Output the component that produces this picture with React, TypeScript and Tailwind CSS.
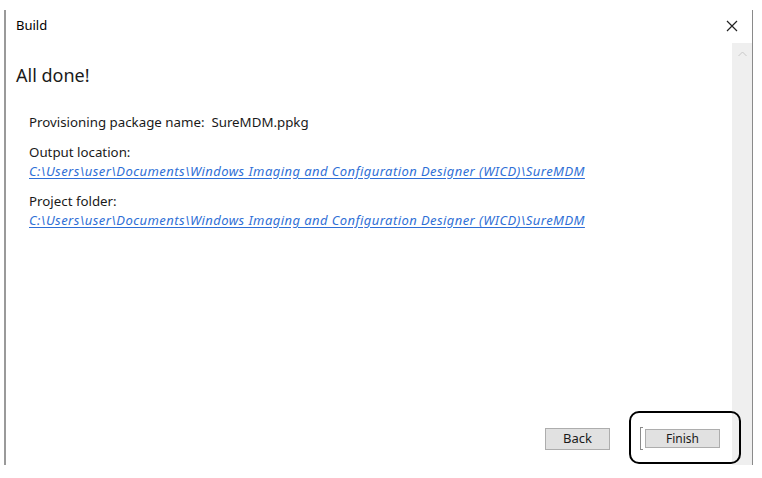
import React from "react";

export default function App() {
  const font = { fontFamily: '"Noto Sans", "Open Sans", Arial, sans-serif' };
  return (
    <div className="relative w-[762px] h-[478px] bg-white overflow-hidden text-[#1a1a1a]" style={font}>
      <div className="ml-[4px] mt-[10px] w-[749px] h-[455px] border-l-2 border-r border-l-[#9a9a9a] border-r-[#8a8a8a] flex flex-col">
        {/* header */}
        <div className="h-[33px] flex items-center justify-between pl-[10px] pr-[14px] shrink-0">
          <span className="text-[13px] text-black pb-[2px]">Build</span>
          <svg width="12" height="12" viewBox="0 0 12 12" className="mb-[2px]">
            <path d="M1 1 L11 11 M11 1 L1 11" stroke="#222" strokeWidth="1.2" />
          </svg>
        </div>
        {/* body */}
        <div className="flex flex-1 min-h-0">
          <div className="flex-1 flex flex-col pl-[10px]">
            <div className="mt-[19px] text-[18px] leading-[26px] text-[#1a1a1a]">All done!</div>
            <div className="pl-[13px] mt-[25px] text-[13.3px] leading-[19px]">
              <div>Provisioning package name:&nbsp; SureMDM.ppkg</div>
              <div className="mt-[11px]">Output location:</div>
              <div className="italic text-[13px] tracking-[0.43px] text-[#2f6fd6] underline underline-offset-2">
                C:\Users\user\Documents\Windows Imaging and Configuration Designer (WICD)\SureMDM
              </div>
              <div className="mt-[11px]">Project folder:</div>
              <div className="italic text-[13px] tracking-[0.43px] text-[#2f6fd6] underline underline-offset-2">
                C:\Users\user\Documents\Windows Imaging and Configuration Designer (WICD)\SureMDM
              </div>
            </div>
            <div className="flex-1" />
            <div className="flex items-center justify-end pr-[12px] mb-[15px]">
              <button className="w-[65px] h-[22px] bg-[#e1e1e1] border border-[#adadad] text-[13px] text-[#1a1a1a] leading-none">
                Back
              </button>
              <div className="ml-[30px] w-[3px] h-[23px] border border-r-0 border-[#8a8a8a]" />
              <div className="ml-[2px] w-[75px] h-[19px] bg-[#e1e1e1] border border-[#adadad] flex items-center justify-center text-[12px] text-[#1a1a1a] leading-none">
                Finish
              </div>
            </div>
          </div>
          <div className="w-[20px] bg-[#efefef] flex flex-col items-center pt-[8px] shrink-0">
            <svg width="9" height="6" viewBox="0 0 9 6">
              <path d="M0.5 5 L4.5 1 L8.5 5" stroke="#c8c8c8" strokeWidth="1" fill="none" />
            </svg>
          </div>
        </div>
      </div>
      <div className="absolute left-[629px] top-[411px] w-[112px] h-[53px] border-[2.5px] border-black rounded-[10px]" />
    </div>
  );
}
